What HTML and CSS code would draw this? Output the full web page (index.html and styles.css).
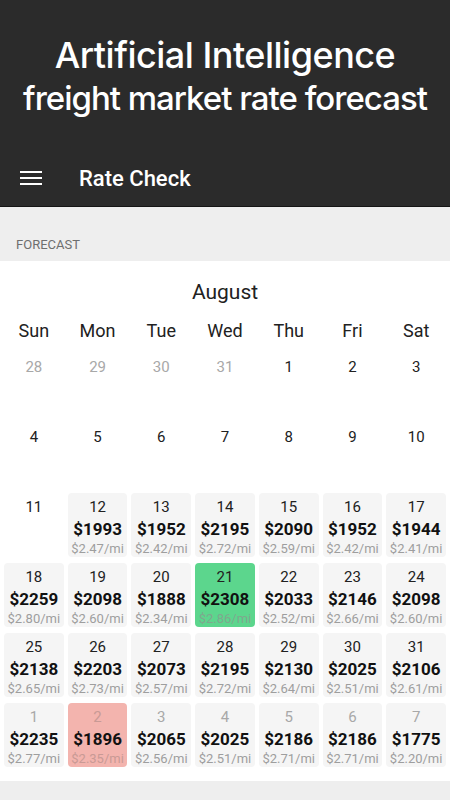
FILE: index.html
```html
<!DOCTYPE html>
<html lang="en">
<head>
  <meta charset="UTF-8" />
  <meta name="viewport" content="width=device-width, initial-scale=1.0"/>
  <title>Rate Check</title>
  <link rel="stylesheet" href="styles.css">
</head>
<body>

<!-- Promo header + toolbar -->
<div class="top">
  <h1 class="promo">
    <span class="promo-main">Artificial Intelligence</span>
    <span class="promo-sub">freight market rate forecast</span>
  </h1>
  <div class="toolbar">
    <svg class="menu-icon" width="22" height="16" viewBox="0 0 22 16">
      <rect x="0" y="1" width="22" height="2" fill="#fff"/>
      <rect x="0" y="7" width="22" height="2" fill="#fff"/>
      <rect x="0" y="13" width="22" height="2" fill="#fff"/>
    </svg>
    <span class="toolbar-title">Rate Check</span>
  </div>
</div>

<div class="section-label">FORECAST</div>

<!-- Calendar -->
<div class="calendar">
  <div class="month">August</div>
  <div class="weekdays">
    <span>Sun</span><span>Mon</span><span>Tue</span><span>Wed</span><span>Thu</span><span>Fri</span><span>Sat</span>
  </div>
  <div class="days">
    <div class="day muted"><div class="num">28</div></div>
    <div class="day muted"><div class="num">29</div></div>
    <div class="day muted"><div class="num">30</div></div>
    <div class="day muted"><div class="num">31</div></div>
    <div class="day"><div class="num">1</div></div>
    <div class="day"><div class="num">2</div></div>
    <div class="day"><div class="num">3</div></div>

    <div class="day"><div class="num">4</div></div>
    <div class="day"><div class="num">5</div></div>
    <div class="day"><div class="num">6</div></div>
    <div class="day"><div class="num">7</div></div>
    <div class="day"><div class="num">8</div></div>
    <div class="day"><div class="num">9</div></div>
    <div class="day"><div class="num">10</div></div>

    <div class="day"><div class="num">11</div></div>
    <div class="day rate"><div class="num">12</div><div class="price">$1993</div><div class="per-mile">$2.47/mi</div></div>
    <div class="day rate"><div class="num">13</div><div class="price">$1952</div><div class="per-mile">$2.42/mi</div></div>
    <div class="day rate"><div class="num">14</div><div class="price">$2195</div><div class="per-mile">$2.72/mi</div></div>
    <div class="day rate"><div class="num">15</div><div class="price">$2090</div><div class="per-mile">$2.59/mi</div></div>
    <div class="day rate"><div class="num">16</div><div class="price">$1952</div><div class="per-mile">$2.42/mi</div></div>
    <div class="day rate"><div class="num">17</div><div class="price">$1944</div><div class="per-mile">$2.41/mi</div></div>

    <div class="day rate"><div class="num">18</div><div class="price">$2259</div><div class="per-mile">$2.80/mi</div></div>
    <div class="day rate"><div class="num">19</div><div class="price">$2098</div><div class="per-mile">$2.60/mi</div></div>
    <div class="day rate"><div class="num">20</div><div class="price">$1888</div><div class="per-mile">$2.34/mi</div></div>
    <div class="day rate best"><div class="num">21</div><div class="price">$2308</div><div class="per-mile">$2.86/mi</div></div>
    <div class="day rate"><div class="num">22</div><div class="price">$2033</div><div class="per-mile">$2.52/mi</div></div>
    <div class="day rate"><div class="num">23</div><div class="price">$2146</div><div class="per-mile">$2.66/mi</div></div>
    <div class="day rate"><div class="num">24</div><div class="price">$2098</div><div class="per-mile">$2.60/mi</div></div>

    <div class="day rate"><div class="num">25</div><div class="price">$2138</div><div class="per-mile">$2.65/mi</div></div>
    <div class="day rate"><div class="num">26</div><div class="price">$2203</div><div class="per-mile">$2.73/mi</div></div>
    <div class="day rate"><div class="num">27</div><div class="price">$2073</div><div class="per-mile">$2.57/mi</div></div>
    <div class="day rate"><div class="num">28</div><div class="price">$2195</div><div class="per-mile">$2.72/mi</div></div>
    <div class="day rate"><div class="num">29</div><div class="price">$2130</div><div class="per-mile">$2.64/mi</div></div>
    <div class="day rate"><div class="num">30</div><div class="price">$2025</div><div class="per-mile">$2.51/mi</div></div>
    <div class="day rate"><div class="num">31</div><div class="price">$2106</div><div class="per-mile">$2.61/mi</div></div>

    <div class="day rate muted"><div class="num">1</div><div class="price">$2235</div><div class="per-mile">$2.77/mi</div></div>
    <div class="day rate muted worst"><div class="num">2</div><div class="price">$1896</div><div class="per-mile">$2.35/mi</div></div>
    <div class="day rate muted"><div class="num">3</div><div class="price">$2065</div><div class="per-mile">$2.56/mi</div></div>
    <div class="day rate muted"><div class="num">4</div><div class="price">$2025</div><div class="per-mile">$2.51/mi</div></div>
    <div class="day rate muted"><div class="num">5</div><div class="price">$2186</div><div class="per-mile">$2.71/mi</div></div>
    <div class="day rate muted"><div class="num">6</div><div class="price">$2186</div><div class="per-mile">$2.71/mi</div></div>
    <div class="day rate muted"><div class="num">7</div><div class="price">$1775</div><div class="per-mile">$2.20/mi</div></div>
  </div>
</div>

</body>
</html>
```

FILE: styles.css
```css
body {
  font-family: Roboto, "Noto Sans", Arial, sans-serif;
  margin: 0;
  padding: 0;
  background-color: #eeeeee;
  color: #212121;
}
.top {
  background-color: #2b2b2b;
  color: white;
  border-bottom: 1px solid #151515;
}
.promo {
  margin: 0;
  padding-top: 34px;
  text-align: center;
  font-family: Inter, Roboto, sans-serif;
  font-weight: 500;
  line-height: 43px;
}
.promo span {
  display: block;
}
.promo-main {
  font-size: 36px;
  letter-spacing: -0.5px;
}
.promo-sub {
  font-size: 33px;
  letter-spacing: -1px;
}
.toolbar {
  display: flex;
  align-items: center;
  height: 56px;
  margin-top: 30px;
  padding-left: 20px;
}
.menu-icon {
  display: block;
}
.toolbar-title {
  margin-left: 37px;
  font-size: 22px;
  font-weight: 500;
}
.section-label {
  padding: 30px 16px 8px;
  font-size: 13px;
  line-height: 16px;
  color: #6e6e6e;
}
.calendar {
  background: white;
  padding: 18px 4px 14px;
}
.month {
  text-align: center;
  font-size: 21px;
  line-height: 26px;
}
.weekdays {
  display: grid;
  grid-template-columns: repeat(7, 1fr);
  gap: 4px;
  margin-top: 14px;
  font-size: 18px;
  line-height: 24px;
  text-align: center;
}
.days {
  display: grid;
  grid-template-columns: repeat(7, 1fr);
  grid-auto-rows: 64px;
  column-gap: 4px;
  row-gap: 6px;
  margin-top: 10px;
  text-align: center;
}
.day {
  border-radius: 4px;
  padding-top: 5px;
}
.day .num {
  font-size: 15px;
  line-height: 18px;
}
.day.muted .num {
  color: #a8a8a8;
}
.day.rate {
  background-color: #f5f5f5;
}
.price {
  font-size: 17px;
  font-weight: 700;
  line-height: 27px;
  color: #111;
}
.per-mile {
  font-size: 13px;
  line-height: 12px;
  color: #9e9e9e;
}
.day.best {
  background-color: #5cd68d;
}
.day.best .per-mile {
  color: #7fa88d;
}
.day.worst {
  background-color: #f3b4ae;
}
.day.worst .num,
.day.worst .per-mile {
  color: #c99a95;
}
```
